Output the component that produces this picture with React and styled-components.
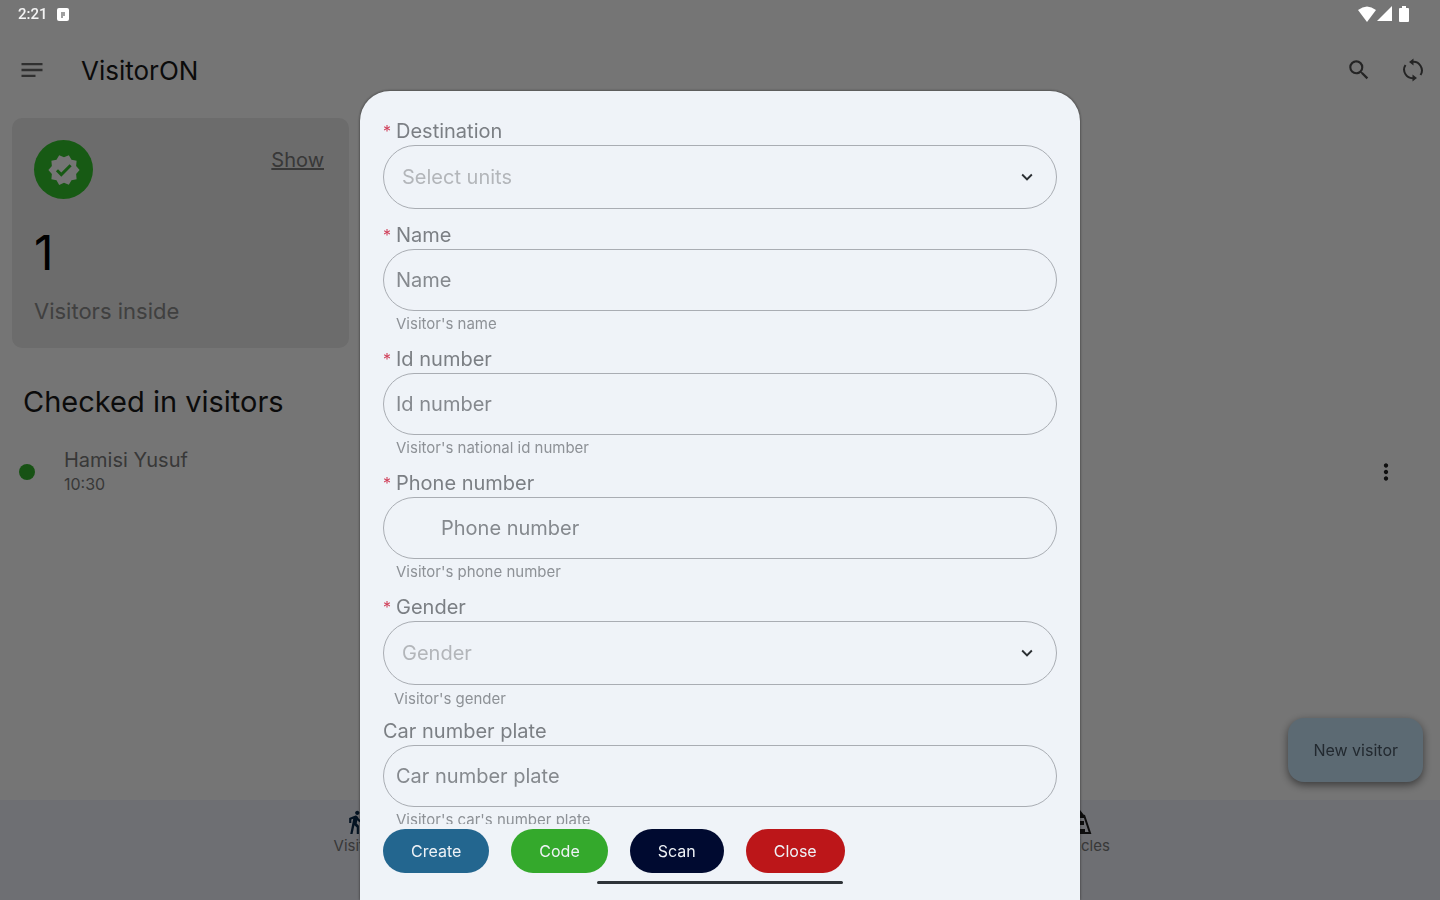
import { useState } from "react";
import styled, { createGlobalStyle } from "styled-components";
import {
  MdExpandMore,
  MdMoreVert,
  MdNotes,
  MdSearch,
  MdTransferWithinAStation,
  MdVerified,
} from "react-icons/md";

const GlobalStyle = createGlobalStyle`
  * {
    box-sizing: border-box;
  }

  body {
    margin: 0;
    background: #ffffff;
    font-family: Inter, "Open Sans", sans-serif;
  }

  button,
  input,
  select {
    font-family: inherit;
  }

  h1,
  h2,
  p,
  ul {
    margin: 0;
    padding: 0;
  }
`;

const Page = styled.div`
  min-height: 100vh;
  display: flex;
  flex-direction: column;
`;

const StatusBar = styled.div`
  position: relative;
  z-index: 3;
  height: 28px;
  padding: 0 30px 0 18px;
  display: flex;
  align-items: center;
  justify-content: space-between;
  color: #f4f4f4;
  font-family: Roboto, sans-serif;
  font-size: 15px;
  font-weight: 500;
`;

const StatusGroup = styled.div`
  display: flex;
  align-items: center;
  gap: 9px;
`;

const AppBar = styled.header`
  height: 84px;
  padding: 0 16px 0 18px;
  display: flex;
  align-items: center;
`;

const IconButton = styled.button`
  display: flex;
  padding: 0;
  border: none;
  background: none;
  color: ${({ $color }) => $color || "#505050"};
  font-size: ${({ $size }) => $size || 26}px;
`;

const AppTitle = styled.h1`
  flex: 1;
  margin-left: 35px;
  color: #1a1a1a;
  font-size: 26px;
  font-weight: 400;
`;

const AppActions = styled.div`
  display: flex;
  align-items: center;
  gap: 30px;
`;

const Main = styled.main`
  flex: 1;
  padding: 6px 12px 0;
`;

const Card = styled.section`
  width: 22%;
  min-width: 337px;
  height: 230px;
  padding: 22px 25px 22px 22px;
  display: flex;
  flex-direction: column;
  border-radius: 10px;
  background: #ebebeb;
`;

const CardTop = styled.div`
  display: flex;
  justify-content: space-between;
`;

const Medal = styled.span`
  width: 59px;
  height: 59px;
  display: flex;
  align-items: center;
  justify-content: center;
  border-radius: 50%;
  background: #34c42c;
  color: #ffffff;
  font-size: 34px;
`;

const ShowLink = styled.a`
  margin-top: 8px;
  color: #7a7a7a;
  font-size: 20px;
  line-height: 24px;
`;

const Count = styled.p`
  margin-top: 26px;
  color: #000000;
  font-size: 48px;
  line-height: 56px;
`;

const CountLabel = styled.p`
  margin-top: 18px;
  color: #8c8c8c;
  font-size: 22px;
  line-height: 24px;
`;

const SectionTitle = styled.h2`
  margin: 36px 0 0 11px;
  color: #1a1a1a;
  font-size: 29px;
  font-weight: 400;
  line-height: 36px;
`;

const VisitorList = styled.ul`
  margin-top: 28px;
  list-style: none;
`;

const VisitorRow = styled.li`
  padding: 0 29px 0 7px;
  display: flex;
  align-items: center;
`;

const Dot = styled.span`
  width: 16px;
  height: 16px;
  border-radius: 50%;
  background: #34b42c;
`;

const VisitorText = styled.div`
  flex: 1;
  margin-left: 29px;
`;

const VisitorName = styled.p`
  color: #7a7a7a;
  font-size: 20px;
  line-height: 24px;
`;

const VisitorTime = styled.p`
  color: #7a7a7a;
  font-size: 16px;
  line-height: 24px;
`;

const NewVisitor = styled.button`
  position: fixed;
  right: 17px;
  bottom: 118px;
  height: 64px;
  padding: 0 25px;
  border: none;
  border-radius: 16px;
  background: #c9e6fa;
  box-shadow: 0 3px 8px rgba(0, 0, 0, 0.5);
  color: #4a5a68;
  font-size: 16px;
`;

const BottomNav = styled.nav`
  height: 100px;
  display: flex;
  background: #f0f2fa;
`;

const NavItem = styled.a`
  flex: 1;
  padding-top: 9px;
  display: flex;
  flex-direction: column;
  align-items: center;
  color: #7a7a7a;
  font-size: 15px;
  line-height: 22px;
  text-decoration: none;

  svg {
    color: ${({ $active }) => ($active ? "#0a2a4a" : "#202020")};
    font-size: 26px;
  }
`;

const Scrim = styled.div`
  position: fixed;
  inset: 0;
  z-index: 2;
  padding-top: 91px;
  display: flex;
  justify-content: center;
  background: rgba(0, 0, 0, 0.54);
`;

const Sheet = styled.form`
  width: 50%;
  padding: 22px 23px 0;
  display: flex;
  flex-direction: column;
  border-radius: 30px 30px 0 0;
  background: #eff3f8;
  box-shadow: 0 0 3px rgba(0, 0, 0, 0.6);
`;

const Fields = styled.div`
  flex: 1;
  min-height: 0;
  padding-top: 8px;
  overflow: hidden;
`;

const FieldBox = styled.div`
  margin-bottom: ${({ $helped }) => ($helped ? 12 : 16)}px;
`;

const Label = styled.label`
  height: 24px;
  display: flex;
  color: #7b7f84;
  font-size: 20px;
  line-height: 20px;
`;

const Star = styled.span`
  width: 13px;
  color: #d0405a;
  font-size: 16px;
`;

const Input = styled.input`
  display: block;
  width: 100%;
  height: 62px;
  padding: 0 12px 0 ${({ $indent }) => ($indent ? 57 : 12)}px;
  border: 1px solid #a9adb3;
  border-radius: 32px;
  outline: none;
  background: transparent;
  color: #33373c;
  font-size: 20px;

  &::placeholder {
    color: #85898e;
    opacity: 1;
  }
`;

const SelectBox = styled.div`
  position: relative;

  svg {
    position: absolute;
    top: 21px;
    right: 19px;
    color: #2b2f33;
    font-size: 22px;
    pointer-events: none;
  }
`;

const Select = styled.select`
  display: block;
  width: 100%;
  height: 64px;
  padding: 0 48px 0 18px;
  border: 1px solid #a9adb3;
  border-radius: 32px;
  outline: none;
  appearance: none;
  background: transparent;
  color: #b3b6ba;
  font-size: 20px;
`;

const Helper = styled.p`
  height: ${({ $select }) => ($select ? 24 : 26)}px;
  padding-top: ${({ $select }) => ($select ? 4 : 0)}px;
  padding-left: ${({ $select }) => ($select ? 11 : 13)}px;
  color: #8d9196;
  font-size: 15px;
  line-height: ${({ $select }) => ($select ? 20 : 26)}px;
`;

const Actions = styled.div`
  padding: 5px 0 27px;
  display: flex;
  gap: 22px;
`;

const Action = styled.button`
  height: 44px;
  padding: 0 28px;
  border: none;
  border-radius: 22px;
  background: ${({ $color }) => $color};
  color: #eef2f6;
  font-size: 16px;
`;

const HomeBar = styled.div`
  position: fixed;
  bottom: 16px;
  left: 50%;
  z-index: 3;
  width: 246px;
  height: 3px;
  margin-left: -123px;
  border-radius: 2px;
  background: #2e3338;
`;

const StatusIcons = () => (
  <svg width="53" height="18" viewBox="0 0 53 18" fill="#ffffff">
    <path d="M1 5Q10-2 19 5L10 17Z" />
    <path d="M35 1V16H20Z" />
    <path d="M43 3h2V1h4v2h2q1 0 1 1V16q0 1-1 1h-8q-1 0-1-1V4q0-1 1-1Z" />
  </svg>
);

const AppIcon = () => (
  <svg width="12" height="13" viewBox="0 0 12 13">
    <rect width="12" height="13" rx="2" fill="#ffffff" />
    <path d="M4 4h4v4H6v2H4Z" fill="#a0a0a0" />
  </svg>
);

const SyncIcon = () => (
  <svg width="22" height="24" viewBox="0 0 22 24" fill="none">
    <path
      d="M10 4A8.500 8.500 0 0 1 18.500 17M12 20A8.500 8.500 0 0 1 3.500 7"
      stroke="currentColor"
      strokeWidth="2"
    />
    <path
      d="M7 4 11.500 0.500V7.500ZM15 20 10.500 16.500V23.500Z"
      fill="currentColor"
    />
  </svg>
);

const VehiclesIcon = () => (
  <svg width="24" height="26" viewBox="0 0 24 26" fill="none">
    <path d="M8 6 12 1l4 5v3H8ZM8 12h8v4H8ZM7 20h10v3H7Z" fill="currentColor" />
    <path d="M8 6 2 24H22L16 6" stroke="currentColor" strokeWidth="2" />
  </svg>
);

const fields = [
  { id: "destination", label: "Destination", hint: "Select units", required: true, select: true },
  { id: "name", label: "Name", hint: "Name", helper: "Visitor's name", required: true },
  {
    id: "idNumber",
    label: "Id number",
    hint: "Id number",
    helper: "Visitor's national id number",
    required: true,
  },
  {
    id: "phone",
    label: "Phone number",
    hint: "Phone number",
    helper: "Visitor's phone number",
    required: true,
    indent: true,
  },
  {
    id: "gender",
    label: "Gender",
    hint: "Gender",
    helper: "Visitor's gender",
    required: true,
    select: true,
  },
  {
    id: "plate",
    label: "Car number plate",
    hint: "Car number plate",
    helper: "Visitor's car's number plate",
  },
];

const Field = ({ field, value, onChange }) => (
  <FieldBox $helped={!!field.helper}>
    <Label htmlFor={field.id}>
      {field.required && <Star>*</Star>}
      {field.label}
    </Label>
    {field.select ? (
      <SelectBox>
        <Select id={field.id} value={value} onChange={onChange}>
          <option value="">{field.hint}</option>
        </Select>
        <MdExpandMore />
      </SelectBox>
    ) : (
      <Input
        id={field.id}
        placeholder={field.hint}
        value={value}
        onChange={onChange}
        $indent={field.indent}
      />
    )}
    {field.helper && <Helper $select={field.select}>{field.helper}</Helper>}
  </FieldBox>
);

const App = () => {
  const [values, setValues] = useState({});
  const change = (id) => (e) => setValues({ ...values, [id]: e.target.value });

  return (
    <>
      <GlobalStyle />
      <Page>
        <StatusBar>
          <StatusGroup>
            2:21
            <AppIcon />
          </StatusGroup>
          <StatusIcons />
        </StatusBar>
        <AppBar>
          <IconButton aria-label="Menu" $color="#6a6a6a" $size={28}>
            <MdNotes />
          </IconButton>
          <AppTitle>VisitorON</AppTitle>
          <AppActions>
            <IconButton aria-label="Search">
              <MdSearch />
            </IconButton>
            <IconButton aria-label="Refresh">
              <SyncIcon />
            </IconButton>
          </AppActions>
        </AppBar>
        <Main>
          <Card>
            <CardTop>
              <Medal>
                <MdVerified />
              </Medal>
              <ShowLink href="#visitors">Show</ShowLink>
            </CardTop>
            <Count>1</Count>
            <CountLabel>Visitors inside</CountLabel>
          </Card>
          <SectionTitle>Checked in visitors</SectionTitle>
          <VisitorList id="visitors">
            <VisitorRow>
              <Dot />
              <VisitorText>
                <VisitorName>Hamisi Yusuf</VisitorName>
                <VisitorTime>10:30</VisitorTime>
              </VisitorText>
              <IconButton aria-label="More" $color="#222222">
                <MdMoreVert />
              </IconButton>
            </VisitorRow>
          </VisitorList>
        </Main>
        <BottomNav>
          <NavItem href="#visitors" $active>
            <MdTransferWithinAStation />
            Visitors
          </NavItem>
          <NavItem href="#vehicles">
            <VehiclesIcon />
            Vehicles
          </NavItem>
        </BottomNav>
        <NewVisitor>New visitor</NewVisitor>
      </Page>
      <Scrim>
        <Sheet onSubmit={(e) => e.preventDefault()}>
          <Fields>
            {fields.map((field) => (
              <Field
                key={field.id}
                field={field}
                value={values[field.id] || ""}
                onChange={change(field.id)}
              />
            ))}
          </Fields>
          <Actions>
            <Action type="submit" $color="#23668f">
              Create
            </Action>
            <Action type="button" $color="#34a92c">
              Code
            </Action>
            <Action type="button" $color="#000a30">
              Scan
            </Action>
            <Action type="button" $color="#bc1619">
              Close
            </Action>
          </Actions>
        </Sheet>
      </Scrim>
      <HomeBar />
    </>
  );
};

export default App;
